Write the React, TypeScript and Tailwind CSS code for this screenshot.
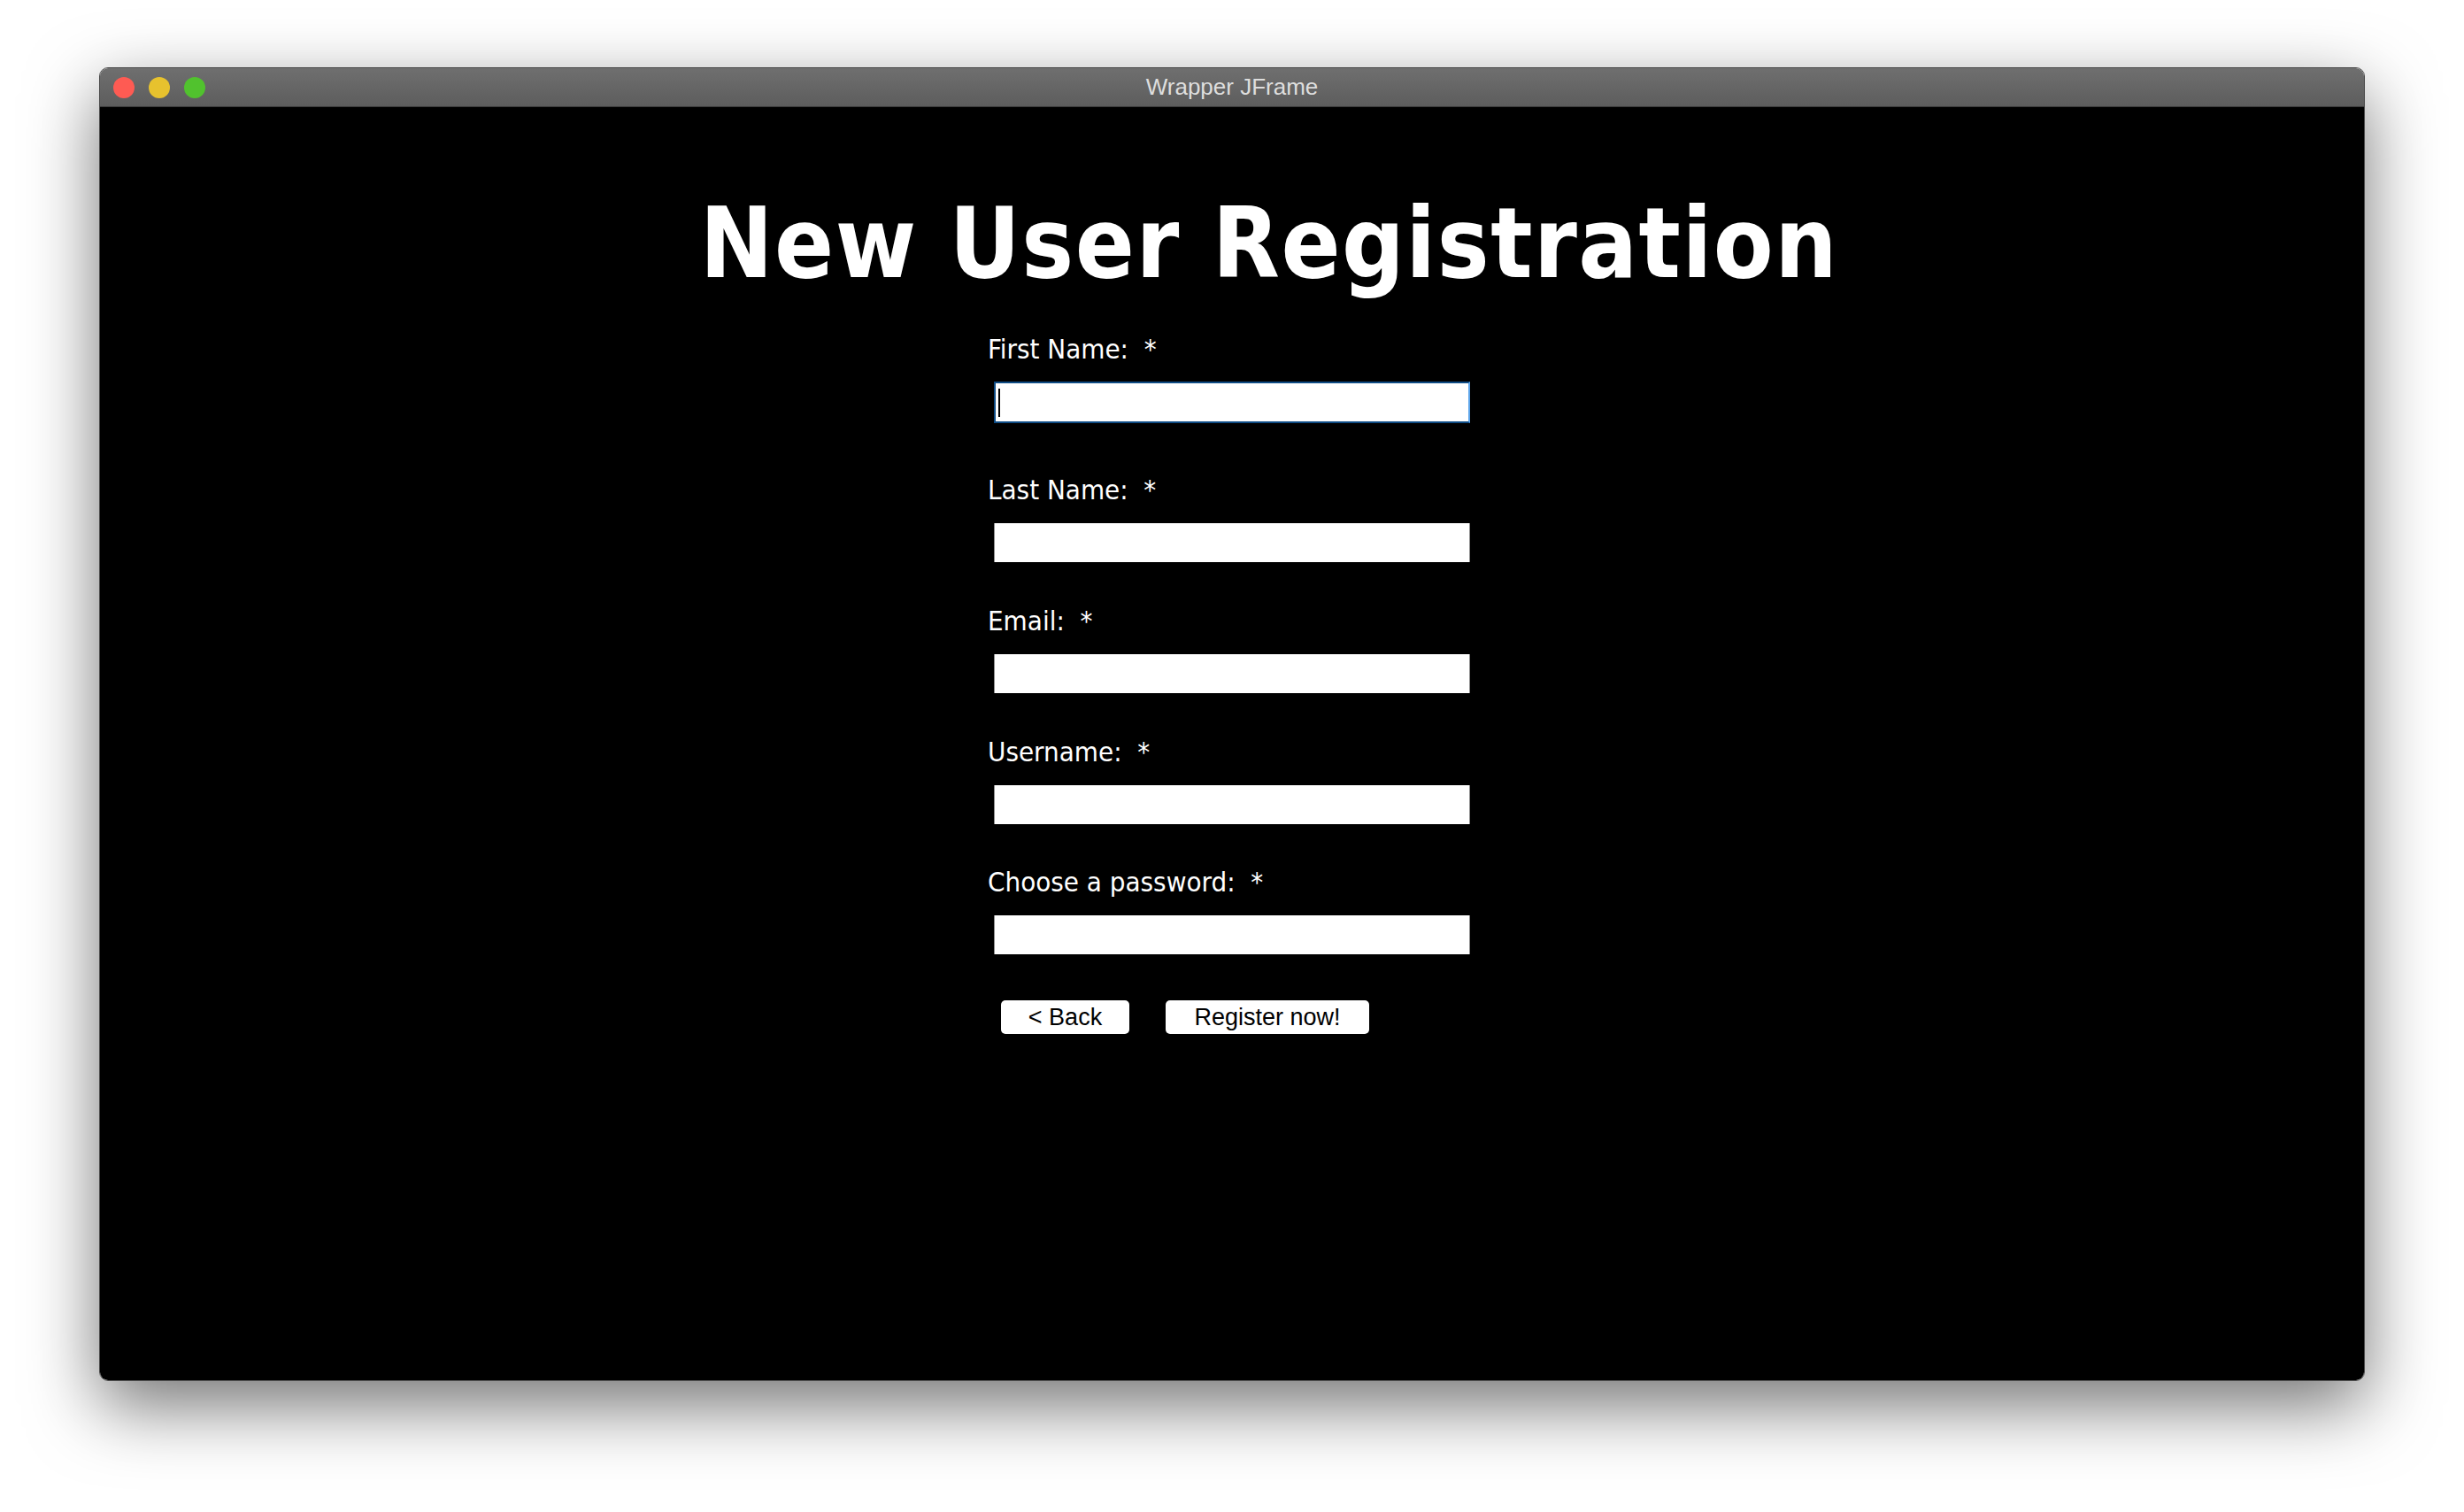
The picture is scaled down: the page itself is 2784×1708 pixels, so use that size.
import React from "react";

const labelFont = { fontFamily: '"DejaVu Sans Condensed", "DejaVu Sans", sans-serif' };

const Field = ({ label, first }: { label: string; first?: boolean }) => {
  return (
    <div className="flex flex-col">
      <label
        className="text-white text-[31px] leading-[36px] whitespace-pre"
        style={labelFont}
      >
        {label}
      </label>
      {first ? (
        <div className="mt-[19px] ml-[7px] h-[47px] w-[538px] bg-white border-2 border-[#0f4c85] border-r-[#5fa6ea] flex items-center pl-[3px]">
          <span className="block w-[2px] h-[32px] bg-black"></span>
        </div>
      ) : (
        <div className="mt-[20px] ml-[7px] h-[44px] w-[538px] bg-white border-x border-[#8f8f8f]"></div>
      )}
    </div>
  );
};

const App = () => {
  return (
    <div className="w-[2784px] h-[1708px] bg-white flex justify-center pt-[76px]">
      <div className="w-[2560px] h-[1484px] rounded-[10px] overflow-hidden border border-[#4a4a4a] shadow-[0_28px_80px_rgba(0,0,0,0.55)] flex flex-col">
        {/* title bar */}
        <div className="h-[44px] bg-gradient-to-b from-[#6f6f6f] to-[#5d5d5d] flex items-center relative border-b border-[#3c3c3c]">
          <div className="flex items-center gap-[16px] pl-[15px]">
            <span className="w-[24px] h-[24px] rounded-full bg-[#fe5b53]"></span>
            <span className="w-[24px] h-[24px] rounded-full bg-[#e7c22e]"></span>
            <span className="w-[24px] h-[24px] rounded-full bg-[#51c22e]"></span>
          </div>
          <div
            className="absolute inset-0 flex items-center justify-center text-[26px] text-[#dedede]"
            style={{ fontFamily: '"Liberation Sans", Arial, sans-serif' }}
          >
            Wrapper JFrame
          </div>
        </div>

        {/* content */}
        <div className="flex-1 bg-black flex flex-col items-center">
          <h1
            className="mt-[99px] pl-[84px] text-white font-bold text-[110px] leading-[110px] tracking-[1.5px]"
            style={labelFont}
          >
            New User Registration
          </h1>

          <div className="mt-[46px] w-[552px] flex flex-col">
            <Field label="First Name:  *" first />
            <div className="mt-[57px]">
              <Field label="Last Name:  *" />
            </div>
            <div className="mt-[48px]">
              <Field label="Email:  *" />
            </div>
            <div className="mt-[48px]">
              <Field label="Username:  *" />
            </div>
            <div className="mt-[47px]">
              <Field label="Choose a password:  *" />
            </div>

            <div
              className="mt-[52px] ml-[15px] flex gap-[41px] text-[27px] text-black"
              style={{ fontFamily: '"Liberation Sans", Arial, sans-serif' }}
            >
              <button className="w-[145px] h-[38px] bg-white rounded-[5px] flex items-center justify-center">
                &lt; Back
              </button>
              <button className="w-[230px] h-[38px] bg-white rounded-[5px] flex items-center justify-center">
                Register now!
              </button>
            </div>
          </div>
        </div>
      </div>
    </div>
  );
};

export default App;
